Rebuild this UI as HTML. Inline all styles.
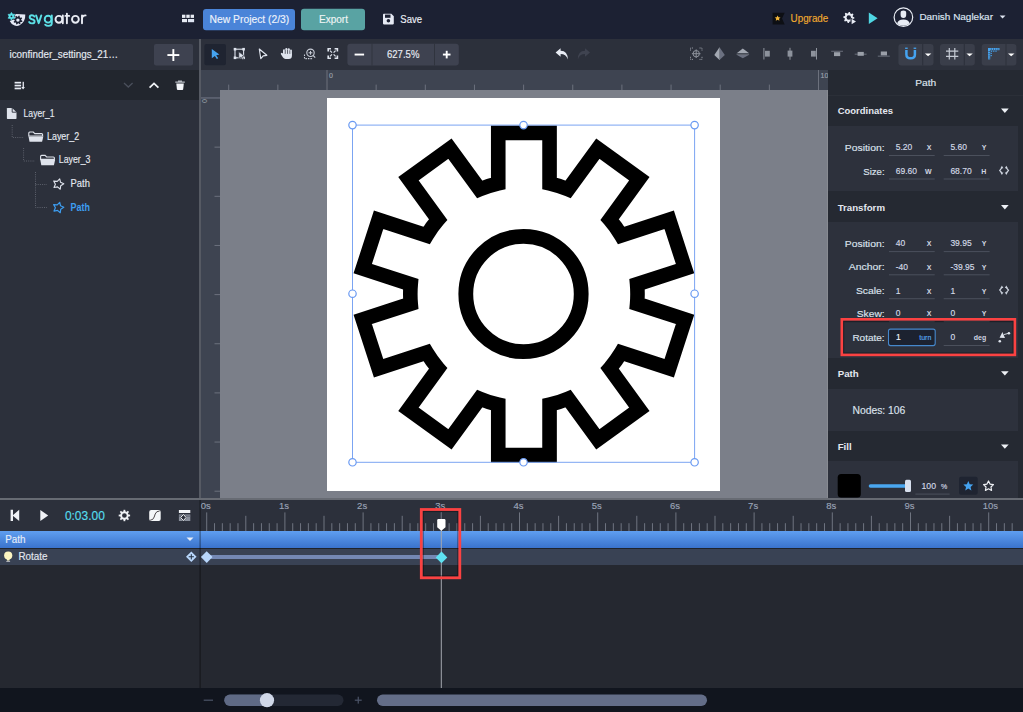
<!DOCTYPE html>
<html><head><meta charset="utf-8">
<style>
html,body{margin:0;padding:0;width:1023px;height:712px;overflow:hidden;background:#2c303b}
svg{display:block}
text{font-family:"Liberation Sans",sans-serif}
</style></head><body>
<svg width="1023" height="712" viewBox="0 0 1023 712">
<rect x="0" y="0" width="1023" height="39" fill="#1c2133" />
<rect x="0" y="39" width="1023" height="31" fill="#2c303b" />
<rect x="0" y="70" width="199" height="30.5" fill="#22262e" />
<rect x="0" y="100" width="199" height="398" fill="#2c303b" />
<rect x="199" y="39" width="2" height="459" fill="#565a63" />
<rect x="201" y="70" width="627" height="428" fill="#3e4451" />
<rect x="220" y="90" width="608" height="408" fill="#7b7f89" />
<rect x="827" y="90" width="1" height="408" fill="#888b92" />
<rect x="327" y="98" width="393" height="393" fill="#ffffff" />
<rect x="828" y="70" width="195" height="428" fill="#252932" />
<rect x="0" y="498" width="1023" height="2" fill="#676b73" />
<rect x="0" y="500" width="1023" height="188" fill="#252830" />
<rect x="0" y="500" width="1023" height="31" fill="#2c303b" />
<rect x="0" y="688" width="1023" height="24" fill="#11151e" />
<path d="M15.6 14.1 L25.3 14.4 Q25.6 21.6 19.6 25.3 Q17.3 26.6 14.6 25.6 Q11.2 24.2 9.7 20.9 L13.8 19.6 Z" fill="#e6eaf6"/>
<path d="M22.41 21.01 L22.14 21.88 L20.64 21.94 L20.22 22.44 L20.44 23.93 L19.64 24.36 L18.53 23.34 L17.89 23.40 L16.99 24.61 L16.12 24.34 L16.06 22.84 L15.56 22.42 L14.07 22.64 L13.64 21.84 L14.66 20.73 L14.60 20.09 L13.39 19.19 L13.66 18.32 L15.16 18.26 L15.58 17.76 L15.36 16.27 L16.16 15.84 L17.27 16.86 L17.91 16.80 L18.81 15.59 L19.68 15.86 L19.74 17.36 L20.24 17.78 L21.73 17.56 L22.16 18.36 L21.14 19.47 L21.20 20.11Z" fill="#1c2133"/>
<circle cx="17.9" cy="20.1" r="1.7" fill="#e6eaf6"/>
<path d="M11.45 12.40 L12.65 14.22 L14.83 14.35 L13.85 16.30 L14.83 18.25 L12.65 18.38 L11.45 20.20 L10.25 18.38 L8.07 18.25 L9.05 16.30 L8.07 14.35 L10.25 14.22Z" fill="#5ce4ec" stroke="#5ce4ec" stroke-width="0.6" stroke-linejoin="round"/>
<circle cx="11.45" cy="16.3" r="0.9" fill="#1c2133"/>
<g fill="none" stroke="#5ce0e6" stroke-width="1.9" stroke-linecap="round" stroke-linejoin="round"><path d="M34.4 16.6 Q33.6 15.3 31.9 15.3 Q29.7 15.3 29.7 17.3 Q29.7 18.7 32 19.2 Q34.6 19.7 34.6 21.5 Q34.6 23.4 32 23.4 Q30.1 23.4 29.2 22.1"/><path d="M36.1 15.4 L38.7 23.2 L41.3 15.4"/><circle cx="48.1" cy="19.2" r="3.4"/><path d="M51.8 15.4 L51.8 23.3 Q51.8 25.9 48.4 25.9 Q46.3 25.9 45.2 24.7"/></g>
<g fill="none" stroke="#e8ebf3" stroke-width="1.9" stroke-linecap="round" stroke-linejoin="round"><circle cx="58.9" cy="19.3" r="3.4"/><path d="M62.8 15.4 L62.8 23.3"/><path d="M66.9 13.6 L66.9 23.3 M65.4 15.9 L69.2 15.9"/><circle cx="75.4" cy="19.3" r="3.4"/><path d="M82 15.4 L82 23.3 M82 19.2 Q82 15.4 85.6 15.4"/></g>
<rect x="182" y="14.7" width="3.4" height="3.2" fill="#e8ecf4" />
<rect x="186.3" y="14.7" width="3.4" height="3.2" fill="#e8ecf4" />
<rect x="190.6" y="14.7" width="3.4" height="3.2" fill="#e8ecf4" />
<rect x="182" y="19" width="5" height="3.2" fill="#e8ecf4" />
<rect x="187.9" y="19" width="6.2" height="3.2" fill="#dfe6f4" />
<rect x="203" y="9" width="92" height="21.3" fill="#4a84d8" rx="3" />
<text x="209.6" y="23" font-size="11" fill="#eef3fb" stroke="#eef3fb" stroke-width="0.15" textLength="79.7" lengthAdjust="spacingAndGlyphs" >New Project (2/3)</text>
<rect x="301" y="8.8" width="64" height="21.5" fill="#59a3a3" rx="3" />
<text x="319" y="22.6" font-size="10.5" fill="#eef5f5" stroke="#eef5f5" stroke-width="0.15" textLength="29" lengthAdjust="spacingAndGlyphs" >Export</text>
<path d="M383 14.5 Q383 13.7 383.8 13.7 L391.3 13.7 L393.8 16.2 L393.8 23.6 Q393.8 24.4 393 24.4 L383.8 24.4 Q383 24.4 383 23.6 Z" fill="#e6eaf4"/>
<rect x="385" y="14.6" width="5.5" height="3.2" fill="#1c2133" />
<circle cx="388.4" cy="20.8" r="1.8" fill="#1c2133"/>
<text x="400.3" y="22.6" font-size="10.5" fill="#eef1f7" stroke="#eef1f7" stroke-width="0.15" textLength="21.7" lengthAdjust="spacingAndGlyphs" >Save</text>
<path d="M772.6 12.8 L784.7 12.8 L782 18.6 L784.7 24.5 L772.6 24.5 Z" fill="#0d0f14"/>
<path d="M777.6 15.4 l0.9 1.9 2 0.2 -1.5 1.3 0.45 2 -1.85 -1.05 -1.85 1.05 0.45 -2 -1.5 -1.3 2 -0.2 z" fill="#f6b83a"/>
<text x="790.6" y="21.5" font-size="10" fill="#f0a92f" stroke="#f0a92f" stroke-width="0.15" textLength="37.7" lengthAdjust="spacingAndGlyphs" >Upgrade</text>
<path d="M854.40 17.50 L854.29 18.59 L852.68 19.11 L852.29 19.83 L852.76 21.46 L851.91 22.16 L850.41 21.38 L849.62 21.62 L848.80 23.10 L847.71 22.99 L847.19 21.38 L846.47 20.99 L844.84 21.46 L844.14 20.61 L844.92 19.11 L844.68 18.32 L843.20 17.50 L843.31 16.41 L844.92 15.89 L845.31 15.17 L844.84 13.54 L845.69 12.84 L847.19 13.62 L847.98 13.38 L848.80 11.90 L849.89 12.01 L850.41 13.62 L851.13 14.01 L852.76 13.54 L853.46 14.39 L852.68 15.89 L852.92 16.68Z" fill="#e8ecf4"/>
<circle cx="848.8" cy="17.5" r="2.2" fill="#1c2133"/>
<path d="M850.5 17.5 L850.5 25 L856.5 21.25 Z" fill="#1c2133"/>
<path d="M851.6 18.8 L851.6 24.3 L856 21.5 Z" fill="#e8ecf4"/>
<path d="M868.8 12.6 L877.6 18.3 L868.8 24 Z" fill="#4fd6e3"/>
<circle cx="903.4" cy="17.2" r="9.3" fill="none" stroke="#e8ecf4" stroke-width="1.2"/>
<path d="M900.6 12.8 Q900.6 10.5 903.4 10.5 Q906.2 10.5 906.2 12.8 L906.2 15 Q906.2 18 903.4 18 Q900.6 18 900.6 15 Z" fill="#e8ecf4"/>
<path d="M897.2 23.2 Q898 19.4 903.4 19.4 Q908.8 19.4 909.6 23.2 Q907.2 25.8 903.4 25.8 Q899.6 25.8 897.2 23.2 Z" fill="#e8ecf4"/>
<text x="919.4" y="20.3" font-size="9.6" fill="#dfe6f2" stroke="#dfe6f2" stroke-width="0.15" textLength="73.6" lengthAdjust="spacingAndGlyphs" >Danish Naglekar</text>
<path d="M999.7 15.5 L1005.5 15.5 L1002.6 18.5 Z" fill="#dfe6f2"/>
<text x="9.5" y="58" font-size="11" fill="#e6eaf2" stroke="#e6eaf2" stroke-width="0.15" textLength="108.5" lengthAdjust="spacingAndGlyphs" >iconfinder_settings_21…</text>
<rect x="154" y="44" width="39" height="21.4" fill="#3e4250" rx="2" />
<rect x="167.4" y="54.1" width="11.9" height="1.9" fill="#ffffff" />
<rect x="172.4" y="49.1" width="1.9" height="11.9" fill="#ffffff" />
<rect x="204.4" y="44.1" width="21.6" height="21.2" fill="#1f2431" rx="2" />
<path d="M211.8 48.9 L219.4 54.6 L216.2 55.2 L218.2 58.2 L216.8 59 L214.9 56 L211.8 58.2 Z" fill="#45a3f0"/>
<g fill="none" stroke="#dfe4ee" stroke-width="1.1"><rect x="235" y="49.2" width="8.6" height="8.6"/></g>
<rect x="233.7" y="47.900000000000006" width="2.6" height="2.6" fill="#dfe4ee" />
<rect x="242.29999999999998" y="47.900000000000006" width="2.6" height="2.6" fill="#dfe4ee" />
<rect x="233.7" y="56.5" width="2.6" height="2.6" fill="#dfe4ee" />
<rect x="242.29999999999998" y="56.5" width="2.6" height="2.6" fill="#dfe4ee" />
<path d="M238.8 51.8 L244.5 56 L242.2 56.4 L243.6 58.8 L242.4 59.4 L241 57 L238.8 58.6 Z" fill="#dfe4ee" stroke="#2c303b" stroke-width="0.6"/>
<path d="M259.3 49 L266.8 55.3 L263.2 55.8 L260.8 58.6 Z" fill="none" stroke="#dfe4ee" stroke-width="1.2" stroke-linejoin="round"/>
<path d="M260.8 51.8 L264.2 54.6 L262.2 55 L261 56.8 Z" fill="#1a1d24"/>
<g fill="#dfe4ee"><rect x="283" y="49.3" width="2" height="6" rx="1"/><rect x="285.3" y="48" width="2.1" height="7" rx="1"/><rect x="287.7" y="48.3" width="2.1" height="7" rx="1"/><rect x="290" y="49.6" width="1.9" height="6" rx="0.95"/><path d="M283 53.5 L291.9 53.5 L291.9 56 Q291.9 58.9 288.8 58.9 L285.5 58.9 Q284 58.9 283 57.6 L280.9 54.3 Q280.5 53.3 281.3 52.9 Q282 52.6 282.6 53.3 Z"/></g>
<g stroke="#2c303b" stroke-width="0.5"><path d="M285.15 50 L285.15 54 M287.55 50 L287.55 54 M289.9 50.5 L289.9 54"/></g>
<g fill="none" stroke="#c9ced8" stroke-width="1.1"><circle cx="310.5" cy="52.8" r="3.7"/><path d="M313.2 55.5 L315.2 57.6"/><path d="M304.5 54.5 L304.5 58.6 L313 58.6" stroke-dasharray="1.5 1"/></g>
<rect x="308.6" y="52.3" width="3.8" height="1" fill="#c9ced8" />
<rect x="310" y="50.9" width="1" height="3.8" fill="#c9ced8" />
<g fill="none" stroke="#dfe4ee" stroke-width="1.6"><path d="M328.2 51.5 L328.2 48.8 L331 48.8 M334.6 48.8 L337.4 48.8 L337.4 51.5 M337.4 55.4 L337.4 58.2 L334.6 58.2 M331 58.2 L328.2 58.2 L328.2 55.4"/><path d="M330 50.6 L332 52.6 M335.6 50.6 L333.6 52.6 M330 56.4 L332 54.4 M335.6 56.4 L333.6 54.4" stroke-width="1.2"/></g>
<rect x="347.4" y="43.8" width="111.4" height="21.6" fill="#3e4250" rx="3" />
<rect x="371.5" y="43.8" width="1" height="21.6" fill="#30343e" />
<rect x="434" y="43.8" width="1" height="21.6" fill="#30343e" />
<rect x="354.6" y="53.6" width="9.5" height="1.9" fill="#ffffff" />
<text x="387" y="57.8" font-size="11" fill="#e8ecf4" stroke="#e8ecf4" stroke-width="0.15" textLength="32.4" lengthAdjust="spacingAndGlyphs" >627.5%</text>
<rect x="442.9" y="53.6" width="7.6" height="1.9" fill="#ffffff" />
<rect x="445.75" y="50.8" width="1.9" height="7.6" fill="#ffffff" />
<path d="M560.6 48.3 L555.6 52.5 L560.6 56.7 L560.6 54 Q566 54 567.8 59.4 Q567.8 51 560.6 50.8 Z" fill="#e8ecf4"/>
<path d="M585 48.3 L590 52.5 L585 56.7 L585 54 Q579.6 54 577.8 59.4 Q577.8 51 585 50.8 Z" fill="#3f4350"/>
<g fill="none" stroke="#8d929c" stroke-width="1"><path d="M690.5 50.6 L690.5 48 L693 48 M699.5 48 L702 48 L702 50.6 M702 56.8 L702 59.4 L699.5 59.4 M693 59.4 L690.5 59.4 L690.5 56.8" stroke-dasharray="1.2 0.8"/><circle cx="696.2" cy="53.7" r="3.2"/><path d="M696.2 49.4 L696.2 58 M691.9 53.7 L700.5 53.7"/></g>
<path d="M719 48 L719 59.5 L714.3 55 Z" fill="#a3a8b2"/><path d="M720 48 L724.8 55 L720 59.5 Z" fill="#6b7080"/><rect x="719.2" y="47.5" width="0.8" height="12.5" fill="#8d929c"/>
<path d="M737 53 L742.8 48.5 L748.8 53 Z" fill="#a3a8b2"/><path d="M737 55 L748.8 55 L742.8 58.3 Z" fill="#6b7080"/><rect x="736.6" y="53.7" width="12.5" height="0.8" fill="#8d929c"/>
<rect x="763.4" y="48" width="1" height="11.5" fill="#8d929c" />
<rect x="765" y="50.8" width="4.8" height="5.8" fill="#8d929c" />
<rect x="789.5" y="47.8" width="1" height="12" fill="#8d929c" />
<rect x="787.6" y="50.6" width="4.8" height="6" fill="#8d929c" />
<rect x="816" y="48" width="1" height="11.5" fill="#8d929c" />
<rect x="811" y="50.8" width="4.8" height="5.8" fill="#8d929c" />
<rect x="831.2" y="50.8" width="11.8" height="0.9" fill="#6f7480" />
<rect x="834" y="52.2" width="6.2" height="3.9" fill="#9a9fa8" />
<rect x="854.7" y="53.7" width="11.9" height="0.9" fill="#6f7480" />
<rect x="857.6" y="51.9" width="6.2" height="3.9" fill="#9a9fa8" />
<rect x="877.8" y="55.7" width="12" height="0.9" fill="#6f7480" />
<rect x="880.8" y="51.5" width="6.2" height="3.9" fill="#9a9fa8" />
<rect x="898.4" y="44" width="35.10000000000002" height="21.4" fill="#3a3e4a" rx="3" />
<rect x="922.2" y="44" width="1" height="21.4" fill="#2c303b" />
<path d="M924.9 53.4 L931.4 53.4 L928.1 56.2 Z" fill="#ffffff"/>
<rect x="940" y="44" width="34.799999999999955" height="21.4" fill="#3a3e4a" rx="3" />
<rect x="963.8" y="44" width="1" height="21.4" fill="#2c303b" />
<path d="M966.4 53.4 L972.8 53.4 L969.6 56.2 Z" fill="#ffffff"/>
<rect x="981.7" y="44" width="34.69999999999993" height="21.4" fill="#3a3e4a" rx="3" />
<rect x="1005.5" y="44" width="1" height="21.4" fill="#2c303b" />
<path d="M1008.0 53.4 L1014.5 53.4 L1011.2 56.2 Z" fill="#ffffff"/>
<path d="M906.4 50.1 L906.4 54.4 Q906.4 58.3 910.65 58.3 Q914.9 58.3 914.9 54.4 L914.9 50.1" fill="none" stroke="#45a3f0" stroke-width="2.5"/>
<rect x="905.1" y="47.6" width="2.6" height="1.3" fill="#45a3f0" />
<rect x="913.6" y="47.6" width="2.6" height="1.3" fill="#45a3f0" />
<g stroke="#c5cad4" stroke-width="1.2"><path d="M949.3 48 L949.3 59.5 M954.8 48 L954.8 59.5 M946 51.2 L958.3 51.2 M946 56.3 L958.3 56.3"/></g>
<g fill="#45a3f0"><rect x="988" y="48" width="2.2" height="11.4"/><rect x="988" y="48" width="11.5" height="2.2"/></g>
<g fill="#3a3e4a"><rect x="990.8" y="48.6" width="1" height="1"/><rect x="993" y="48.6" width="1" height="1"/><rect x="995.2" y="48.6" width="1" height="1"/><rect x="997.4" y="48.6" width="1" height="1"/><rect x="988.6" y="51" width="1" height="1"/><rect x="988.6" y="53.2" width="1" height="1"/><rect x="988.6" y="55.4" width="1" height="1"/><rect x="988.6" y="57.6" width="1" height="1"/></g>
<g fill="#45a3f0"><rect x="991" y="50.6" width="1.2" height="1.2"/><rect x="993.2" y="50.6" width="1.2" height="1.2"/><rect x="995.4" y="50.6" width="1.2" height="1.2"/><rect x="990.6" y="52.8" width="1.2" height="1.2"/><rect x="990.6" y="55" width="1.2" height="1.2"/></g>
<rect x="14.6" y="81.8" width="6.5" height="1.7" fill="#e8ecf4" />
<rect x="14.6" y="84.7" width="6.5" height="1.7" fill="#e8ecf4" />
<rect x="14.6" y="87.6" width="6.5" height="1.7" fill="#e8ecf4" />
<rect x="22.6" y="81.8" width="1.3" height="6.5" fill="#e8ecf4" />
<path d="M21.3 87 L24.9 87 L23.1 89.5 Z" fill="#e8ecf4"/>
<path d="M124 83 L128.3 87 L132.6 83" fill="none" stroke="#4a4f5b" stroke-width="1.3"/>
<path d="M149.6 87.6 L154 83.4 L158.4 87.6" fill="none" stroke="#f2f4f8" stroke-width="1.8"/>
<path d="M175.3 81.6 L184.8 81.6 L184.8 82.8 L175.3 82.8 Z M178 80.4 L182 80.4 L182 81.6 L178 81.6 Z" fill="#b8bcc4"/>
<path d="M176.3 83.6 L183.8 83.6 L183.2 89.2 Q183.1 90 182.3 90 L177.8 90 Q177 90 176.9 89.2 Z" fill="#f4f6fa"/>
<path d="M6.9 108.5 Q6.9 107.9 7.5 107.9 L12.2 107.9 L16.5 112.2 L16.5 118.3 Q16.5 118.9 15.9 118.9 L7.5 118.9 Q6.9 118.9 6.9 118.3 Z" fill="#dfe3ec"/>
<path d="M12.2 107.9 L12.2 112.2 L16.5 112.2" fill="none" stroke="#2c303b" stroke-width="0.9"/>
<text x="23.6" y="117.2" font-size="10" fill="#e4e8f0" stroke="#e4e8f0" stroke-width="0.15" textLength="31" lengthAdjust="spacingAndGlyphs" >Layer_1</text>
<path d="M12.2 125 L12.2 137.5 L24 137.5" stroke="#5d616c" stroke-width="1" stroke-dasharray="1 1.2" fill="none"/>
<path d="M28.8 133 Q28.8 132 29.8 132 L33.3 132 L34.8 133.6 L41.6 133.6 Q42.6 133.6 42.6 134.6 L42.6 136 L28.8 136 Z" fill="none" stroke="#dfe3ec" stroke-width="1.1"/>
<path d="M28.5 136.6 L43.3 136.6 L42.1 141.8 L29.5 141.8 Z" fill="#dfe3ec"/>
<text x="47" y="139.8" font-size="10" fill="#e4e8f0" stroke="#e4e8f0" stroke-width="0.15" textLength="32.2" lengthAdjust="spacingAndGlyphs" >Layer_2</text>
<path d="M23.6 148 L23.6 161 L35 161" stroke="#5d616c" stroke-width="1" stroke-dasharray="1 1.2" fill="none"/>
<path d="M40.6 156.4 Q40.6 155.4 41.6 155.4 L45.1 155.4 L46.6 157.0 L53.400000000000006 157.0 Q54.400000000000006 157.0 54.400000000000006 158.0 L54.400000000000006 159.4 L40.6 159.4 Z" fill="none" stroke="#dfe3ec" stroke-width="1.1"/>
<path d="M40.300000000000004 160.0 L55.1 160.0 L53.900000000000006 165.20000000000002 L41.300000000000004 165.20000000000002 Z" fill="#dfe3ec"/>
<text x="58.8" y="163.2" font-size="10" fill="#e4e8f0" stroke="#e4e8f0" stroke-width="0.15" textLength="31.7" lengthAdjust="spacingAndGlyphs" >Layer_3</text>
<path d="M35.5 172 L35.5 207.5 L47 207.5 M35.5 184.5 L47 184.5" stroke="#5d616c" stroke-width="1" stroke-dasharray="1 1.2" fill="none"/>
<path d="M59.72 178.79 L60.55 182.27 L63.79 183.81 L60.73 185.68 L60.27 189.23 L57.55 186.90 L54.03 187.56 L55.40 184.25 L53.69 181.10 L57.26 181.39Z" fill="none" stroke="#dfe3ec" stroke-width="1.1" stroke-linejoin="round"/>
<text x="70.6" y="187.2" font-size="10" fill="#e4e8f0" stroke="#e4e8f0" stroke-width="0.15" textLength="19.3" lengthAdjust="spacingAndGlyphs" >Path</text>
<path d="M59.72 202.29 L60.55 205.77 L63.79 207.31 L60.73 209.18 L60.27 212.73 L57.55 210.40 L54.03 211.06 L55.40 207.75 L53.69 204.60 L57.26 204.89Z" fill="none" stroke="#3d9df0" stroke-width="1.2" stroke-linejoin="round"/>
<text x="70.6" y="210.7" font-size="10" fill="#3d9df0" font-weight="bold" textLength="19.4" lengthAdjust="spacingAndGlyphs" >Path</text>
<rect x="228.2" y="84.6" width="1" height="5.4" fill="#6c717d" />
<rect x="277.35" y="84.6" width="1" height="5.4" fill="#6c717d" />
<rect x="326.5" y="70" width="1" height="20" fill="#6c717d" />
<rect x="375.65" y="84.6" width="1" height="5.4" fill="#6c717d" />
<rect x="424.8" y="84.6" width="1" height="5.4" fill="#6c717d" />
<rect x="473.95" y="84.6" width="1" height="5.4" fill="#6c717d" />
<rect x="523.1" y="84.6" width="1" height="5.4" fill="#6c717d" />
<rect x="572.25" y="84.6" width="1" height="5.4" fill="#6c717d" />
<rect x="621.4" y="84.6" width="1" height="5.4" fill="#6c717d" />
<rect x="670.55" y="84.6" width="1" height="5.4" fill="#6c717d" />
<rect x="719.7" y="84.6" width="1" height="5.4" fill="#6c717d" />
<rect x="768.85" y="84.6" width="1" height="5.4" fill="#6c717d" />
<rect x="818.0" y="70" width="1" height="20" fill="#6c717d" />
<text x="329" y="77.6" font-size="7" fill="#9aa0ab" stroke="#9aa0ab" stroke-width="0.15" >0</text>
<defs><clipPath id="rc"><rect x="201" y="70" width="627" height="20"/></clipPath></defs>
<text x="820.5" y="77.6" font-size="7" fill="#9aa0ab" stroke="#9aa0ab" stroke-width="0.15" clip-path="url(#rc)">10</text>
<rect x="201" y="97.2" width="19" height="1.5" fill="#626775"/>
<rect x="214.5" y="146.65" width="5.5" height="1" fill="#6c717d" />
<rect x="214.5" y="195.8" width="5.5" height="1" fill="#6c717d" />
<rect x="214.5" y="244.95" width="5.5" height="1" fill="#6c717d" />
<rect x="214.5" y="294.1" width="5.5" height="1" fill="#6c717d" />
<rect x="214.5" y="343.25" width="5.5" height="1" fill="#6c717d" />
<rect x="214.5" y="392.4" width="5.5" height="1" fill="#6c717d" />
<rect x="214.5" y="441.55" width="5.5" height="1" fill="#6c717d" />
<rect x="214.5" y="490.7" width="5.5" height="1" fill="#6c717d" />
<text x="0" y="0" font-size="7" fill="#9aa0ab" transform="translate(202 99) rotate(90)">0</text>
<path d="M498.25 183.33 L498.25 132.90 L549.55 132.90 L549.55 183.33 A113.60 113.60 0 0 1 568.20 189.39 L597.84 148.59 L639.34 178.74 L609.70 219.55 A113.60 113.60 0 0 1 621.22 235.41 L669.19 219.82 L685.04 268.61 L637.08 284.20 A113.60 113.60 0 0 1 637.08 303.80 L685.04 319.39 L669.19 368.18 L621.22 352.59 A113.60 113.60 0 0 1 609.70 368.45 L639.34 409.26 L597.84 439.41 L568.20 398.61 A113.60 113.60 0 0 1 549.55 404.67 L549.55 455.10 L498.25 455.10 L498.25 404.67 A113.60 113.60 0 0 1 479.60 398.61 L449.96 439.41 L408.46 409.26 L438.10 368.45 A113.60 113.60 0 0 1 426.58 352.59 L378.61 368.18 L362.76 319.39 L410.72 303.80 A113.60 113.60 0 0 1 410.72 284.20 L362.76 268.61 L378.61 219.82 L426.58 235.41 A113.60 113.60 0 0 1 438.10 219.55 L408.46 178.74 L449.96 148.59 L479.60 189.39 A113.60 113.60 0 0 1 498.25 183.33 Z" fill="none" stroke="#000" stroke-width="14.6" stroke-linejoin="miter" stroke-miterlimit="10"/>
<circle cx="523.5" cy="294" r="57.7" fill="none" stroke="#000" stroke-width="14.8"/>
<rect x="352.5" y="125.1" width="342.1" height="337.2" fill="none" stroke="#7ba4f2" stroke-width="1"/>
<circle cx="352.50" cy="125.10" r="3.7" fill="#fff" stroke="#6a9af2" stroke-width="1.2"/>
<circle cx="523.55" cy="125.10" r="3.7" fill="#fff" stroke="#6a9af2" stroke-width="1.2"/>
<circle cx="694.60" cy="125.10" r="3.7" fill="#fff" stroke="#6a9af2" stroke-width="1.2"/>
<circle cx="352.50" cy="293.70" r="3.7" fill="#fff" stroke="#6a9af2" stroke-width="1.2"/>
<circle cx="694.60" cy="293.70" r="3.7" fill="#fff" stroke="#6a9af2" stroke-width="1.2"/>
<circle cx="352.50" cy="462.30" r="3.7" fill="#fff" stroke="#6a9af2" stroke-width="1.2"/>
<circle cx="523.55" cy="462.30" r="3.7" fill="#fff" stroke="#6a9af2" stroke-width="1.2"/>
<circle cx="694.60" cy="462.30" r="3.7" fill="#fff" stroke="#6a9af2" stroke-width="1.2"/>
<text x="925.7" y="86.1" font-size="9.8" fill="#dfe4ee" stroke="#dfe4ee" stroke-width="0.15" textLength="21" lengthAdjust="spacingAndGlyphs" text-anchor="middle" >Path</text>
<rect x="828" y="95" width="195" height="1" fill="#2b2f38" />
<text x="837.7" y="114.1" font-size="9.5" fill="#e4e8f0" font-weight="bold" textLength="55.3" lengthAdjust="spacingAndGlyphs" >Coordinates</text>
<path d="M1001 108.5 L1008.7 108.5 L1004.85 112.9 Z" fill="#eef1f6"/>
<rect x="828" y="126" width="190" height="65" fill="#2d313c" />
<text x="884.6" y="151.1" font-size="9.8" fill="#dce2ec" stroke="#dce2ec" stroke-width="0.15" textLength="39.8" lengthAdjust="spacingAndGlyphs" text-anchor="end" >Position:</text>
<text x="895.7" y="150.29999999999998" font-size="8.5" fill="#d4dae6" stroke="#d4dae6" stroke-width="0.15" >5.20</text>
<text x="931.5" y="150.29999999999998" font-size="7" fill="#d0d6e2" font-weight="bold" text-anchor="end" >X</text>
<text x="950.4" y="150.29999999999998" font-size="8.5" fill="#d4dae6" stroke="#d4dae6" stroke-width="0.15" >5.60</text>
<text x="986.3" y="150.29999999999998" font-size="7" fill="#d0d6e2" font-weight="bold" text-anchor="end" >Y</text>
<rect x="889" y="155.0" width="45.7" height="1" fill="#4b505c" />
<rect x="943.7" y="155.0" width="45.9" height="1" fill="#4b505c" />
<text x="884.6" y="174.6" font-size="9.8" fill="#dce2ec" stroke="#dce2ec" stroke-width="0.15" textLength="21.3" lengthAdjust="spacingAndGlyphs" text-anchor="end" >Size:</text>
<text x="895.7" y="173.79999999999998" font-size="8.5" fill="#d4dae6" stroke="#d4dae6" stroke-width="0.15" >69.60</text>
<text x="931.5" y="173.79999999999998" font-size="7" fill="#d0d6e2" font-weight="bold" text-anchor="end" >W</text>
<text x="950.4" y="173.79999999999998" font-size="8.5" fill="#d4dae6" stroke="#d4dae6" stroke-width="0.15" >68.70</text>
<text x="986.3" y="173.79999999999998" font-size="7" fill="#d0d6e2" font-weight="bold" text-anchor="end" >H</text>
<rect x="889" y="178.5" width="45.7" height="1" fill="#4b505c" />
<rect x="943.7" y="178.5" width="45.9" height="1" fill="#4b505c" />
<g fill="none" stroke="#cdd3de" stroke-width="1.2"><path d="M1001.9 167.80 L999.7 170.40 L1001.9 173.00"/><path d="M1006.3 167.80 L1008.5 170.40 L1006.3 173.00"/></g>
<g fill="#cdd3de"><path d="M1000.4 168.20 L1001.9 165.80 L1003.4 168.20 Z M1000.4 172.60 L1001.9 175.00 L1003.4 172.60 Z M1004.8 168.20 L1006.3 165.80 L1007.8 168.20 Z M1004.8 172.60 L1006.3 175.00 L1007.8 172.60 Z"/></g>
<text x="837.7" y="210.6" font-size="9.5" fill="#e4e8f0" font-weight="bold" textLength="47.3" lengthAdjust="spacingAndGlyphs" >Transform</text>
<path d="M1001 205.0 L1008.7 205.0 L1004.85 209.4 Z" fill="#eef1f6"/>
<rect x="828" y="222" width="190" height="136" fill="#2d313c" />
<text x="884.6" y="247.2" font-size="9.8" fill="#dce2ec" stroke="#dce2ec" stroke-width="0.15" textLength="39.8" lengthAdjust="spacingAndGlyphs" text-anchor="end" >Position:</text>
<text x="895.7" y="246.39999999999998" font-size="8.5" fill="#d4dae6" stroke="#d4dae6" stroke-width="0.15" >40</text>
<text x="931.5" y="246.39999999999998" font-size="7" fill="#d0d6e2" font-weight="bold" text-anchor="end" >X</text>
<text x="950.4" y="246.39999999999998" font-size="8.5" fill="#d4dae6" stroke="#d4dae6" stroke-width="0.15" >39.95</text>
<text x="986.3" y="246.39999999999998" font-size="7" fill="#d0d6e2" font-weight="bold" text-anchor="end" >Y</text>
<rect x="889" y="251.1" width="45.7" height="1" fill="#4b505c" />
<rect x="943.7" y="251.1" width="45.9" height="1" fill="#4b505c" />
<text x="884.6" y="270.4" font-size="9.8" fill="#dce2ec" stroke="#dce2ec" stroke-width="0.15" textLength="35.8" lengthAdjust="spacingAndGlyphs" text-anchor="end" >Anchor:</text>
<text x="895.7" y="269.59999999999997" font-size="8.5" fill="#d4dae6" stroke="#d4dae6" stroke-width="0.15" >-40</text>
<text x="931.5" y="269.59999999999997" font-size="7" fill="#d0d6e2" font-weight="bold" text-anchor="end" >X</text>
<text x="950.4" y="269.59999999999997" font-size="8.5" fill="#d4dae6" stroke="#d4dae6" stroke-width="0.15" >-39.95</text>
<text x="986.3" y="269.59999999999997" font-size="7" fill="#d0d6e2" font-weight="bold" text-anchor="end" >Y</text>
<rect x="889" y="274.29999999999995" width="45.7" height="1" fill="#4b505c" />
<rect x="943.7" y="274.29999999999995" width="45.9" height="1" fill="#4b505c" />
<text x="884.6" y="294.3" font-size="9.8" fill="#dce2ec" stroke="#dce2ec" stroke-width="0.15" textLength="28.7" lengthAdjust="spacingAndGlyphs" text-anchor="end" >Scale:</text>
<text x="895.7" y="293.5" font-size="8.5" fill="#d4dae6" stroke="#d4dae6" stroke-width="0.15" >1</text>
<text x="931.5" y="293.5" font-size="7" fill="#d0d6e2" font-weight="bold" text-anchor="end" >X</text>
<text x="950.4" y="293.5" font-size="8.5" fill="#d4dae6" stroke="#d4dae6" stroke-width="0.15" >1</text>
<text x="986.3" y="293.5" font-size="7" fill="#d0d6e2" font-weight="bold" text-anchor="end" >Y</text>
<rect x="889" y="298.2" width="45.7" height="1" fill="#4b505c" />
<rect x="943.7" y="298.2" width="45.9" height="1" fill="#4b505c" />
<g fill="none" stroke="#cdd3de" stroke-width="1.2"><path d="M1001.9 287.50 L999.7 290.10 L1001.9 292.70"/><path d="M1006.3 287.50 L1008.5 290.10 L1006.3 292.70"/></g>
<g fill="#cdd3de"><path d="M1000.4 287.90 L1001.9 285.50 L1003.4 287.90 Z M1000.4 292.30 L1001.9 294.70 L1003.4 292.30 Z M1004.8 287.90 L1006.3 285.50 L1007.8 287.90 Z M1004.8 292.30 L1006.3 294.70 L1007.8 292.30 Z"/></g>
<text x="884.6" y="317.2" font-size="9.8" fill="#dce2ec" stroke="#dce2ec" stroke-width="0.15" textLength="27.8" lengthAdjust="spacingAndGlyphs" text-anchor="end" >Skew:</text>
<text x="895.7" y="316.4" font-size="8.5" fill="#d4dae6" stroke="#d4dae6" stroke-width="0.15" >0</text>
<text x="931.5" y="316.4" font-size="7" fill="#d0d6e2" font-weight="bold" text-anchor="end" >X</text>
<text x="950.4" y="316.4" font-size="8.5" fill="#d4dae6" stroke="#d4dae6" stroke-width="0.15" >0</text>
<text x="986.3" y="316.4" font-size="7" fill="#d0d6e2" font-weight="bold" text-anchor="end" >Y</text>
<rect x="889" y="321.09999999999997" width="45.7" height="1" fill="#4b505c" />
<rect x="943.7" y="321.09999999999997" width="45.9" height="1" fill="#4b505c" />
<text x="884.6" y="341" font-size="9.8" fill="#dce2ec" stroke="#dce2ec" stroke-width="0.15" textLength="32.2" lengthAdjust="spacingAndGlyphs" text-anchor="end" >Rotate:</text>
<rect x="888.5" y="329.1" width="46.7" height="16.5" fill="#1c2230" rx="2" stroke="#4588cc" stroke-width="1.1"/>
<text x="895.9" y="340.2" font-size="8.5" fill="#f0f4fa" stroke="#f0f4fa" stroke-width="0.15" >1</text>
<text x="931.3" y="340.2" font-size="7" fill="#58a6ee" stroke="#58a6ee" stroke-width="0.15" text-anchor="end" >turn</text>
<text x="950.4" y="340.2" font-size="8.5" fill="#d4dae6" stroke="#d4dae6" stroke-width="0.15" >0</text>
<text x="986.3" y="340.2" font-size="7" fill="#d0d6e2" font-weight="bold" text-anchor="end" >deg</text>
<rect x="943.7" y="345" width="45.9" height="1" fill="#4b505c" />
<g fill="#e0e5ee"><path d="M1002.4 332 L1005 338.1 L999.6 337.8 Z"/><circle cx="999.8" cy="341.2" r="1.3"/><circle cx="1008.9" cy="333.2" r="1.3"/></g><path d="M1003.8 334.6 L1008.9 333.2" fill="none" stroke="#e0e5ee" stroke-width="0.9"/>
<rect x="843.6" y="321.6" width="169.5" height="31.5" fill="none" stroke="#000" stroke-opacity="0.35" stroke-width="1.2"/>
<rect x="841.8" y="319.3" width="173.1" height="35.6" fill="none" stroke="#fb4242" stroke-width="2.6"/>
<text x="837.7" y="376.8" font-size="9.5" fill="#e4e8f0" font-weight="bold" textLength="21" lengthAdjust="spacingAndGlyphs" >Path</text>
<path d="M1001 371.2 L1008.7 371.2 L1004.85 375.59999999999997 Z" fill="#eef1f6"/>
<rect x="828" y="389" width="190" height="42" fill="#2d313c" />
<text x="852.5" y="414" font-size="10.4" fill="#dce2ec" stroke="#dce2ec" stroke-width="0.15" textLength="52.8" lengthAdjust="spacingAndGlyphs" >Nodes: 106</text>
<text x="837.7" y="450" font-size="9.5" fill="#e4e8f0" font-weight="bold" textLength="14" lengthAdjust="spacingAndGlyphs" >Fill</text>
<path d="M1001 444.4 L1008.7 444.4 L1004.85 448.79999999999995 Z" fill="#eef1f6"/>
<rect x="828" y="461" width="190" height="37" fill="#2d313c" />
<rect x="837.7" y="474" width="23.1" height="23.6" fill="#000000" rx="3.5" />
<rect x="868.7" y="484.2" width="40" height="3.6" fill="#4aa7f0" rx="1.8" />
<rect x="905" y="479.8" width="6" height="12.2" fill="#d8e0ee" rx="1.5" />
<text x="921.5" y="489.2" font-size="9" fill="#d4dae6" stroke="#d4dae6" stroke-width="0.15" textLength="14.5" lengthAdjust="spacingAndGlyphs" >100</text>
<text x="941" y="489" font-size="7" fill="#d0d6e2" stroke="#d0d6e2" stroke-width="0.15" >%</text>
<rect x="915.4" y="493.6" width="34.2" height="1" fill="#4b505c" />
<rect x="959" y="476.8" width="18.7" height="18" fill="#1f2431" rx="2" />
<path d="M968.30 481.00 L969.71 484.26 L973.25 484.59 L970.58 486.94 L971.36 490.41 L968.30 488.60 L965.24 490.41 L966.02 486.94 L963.35 484.59 L966.89 484.26Z" fill="#45a3f0"/>
<path d="M988.50 481.00 L990.03 484.10 L993.45 484.59 L990.97 487.00 L991.56 490.41 L988.50 488.80 L985.44 490.41 L986.03 487.00 L983.55 484.59 L986.97 484.10Z" fill="none" stroke="#f0f2f6" stroke-width="1.2" stroke-linejoin="round"/>
<path d="M10.6 509.8 L13 509.8 L13 521.1 L10.6 521.1 Z M19.2 509.8 L19.2 521.1 L12.5 515.45 Z" fill="#f0f2f6"/>
<path d="M40.3 509.9 L48.2 515.5 L40.3 521.1 Z" fill="#f0f2f6"/>
<text x="64.9" y="519.8" font-size="12.5" fill="#55dcec" stroke="#55dcec" stroke-width="0.15" textLength="39.9" lengthAdjust="spacingAndGlyphs" >0:03.00</text>
<circle cx="124.4" cy="515.5" r="3.3" fill="none" stroke="#f0f2f6" stroke-width="1.9"/>
<rect x="123.5" y="509.8" width="1.8" height="2.4" fill="#f0f2f6" transform="rotate(0 124.4 515.5)"/>
<rect x="123.5" y="509.8" width="1.8" height="2.4" fill="#f0f2f6" transform="rotate(45 124.4 515.5)"/>
<rect x="123.5" y="509.8" width="1.8" height="2.4" fill="#f0f2f6" transform="rotate(90 124.4 515.5)"/>
<rect x="123.5" y="509.8" width="1.8" height="2.4" fill="#f0f2f6" transform="rotate(135 124.4 515.5)"/>
<rect x="123.5" y="509.8" width="1.8" height="2.4" fill="#f0f2f6" transform="rotate(180 124.4 515.5)"/>
<rect x="123.5" y="509.8" width="1.8" height="2.4" fill="#f0f2f6" transform="rotate(225 124.4 515.5)"/>
<rect x="123.5" y="509.8" width="1.8" height="2.4" fill="#f0f2f6" transform="rotate(270 124.4 515.5)"/>
<rect x="123.5" y="509.8" width="1.8" height="2.4" fill="#f0f2f6" transform="rotate(315 124.4 515.5)"/>
<rect x="149.2" y="510" width="11.5" height="11" fill="#f4f6f8" rx="2" />
<path d="M150.2 520.2 Q153.2 520.2 154.2 517 L155.2 514 Q156.2 511 159.6 511" fill="none" stroke="#3a3438" stroke-width="0.9"/>
<rect x="178.9" y="510" width="11.4" height="3" fill="#f4f6f8" />
<rect x="178.9" y="514.4" width="11.4" height="6.6" fill="#8a909c" />
<rect x="178.9" y="515.6" width="11.4" height="1" fill="#5d6270" />
<path d="M183.4 513.4 L187 517.5 L183.4 521.6 L179.8 517.5 Z" fill="#2c303b"/><path d="M183.4 514.4 L186.1 517.5 L183.4 520.6 L180.7 517.5 Z" fill="none" stroke="#f4f6f8" stroke-width="1"/>
<rect x="206.2" y="512.4" width="1" height="18.600000000000023" fill="#6f7480" />
<rect x="214.02" y="523.2" width="1" height="7.7999999999999545" fill="#6f7480" />
<rect x="221.84" y="523.2" width="1" height="7.7999999999999545" fill="#6f7480" />
<rect x="229.66" y="523.2" width="1" height="7.7999999999999545" fill="#6f7480" />
<rect x="237.48" y="523.2" width="1" height="7.7999999999999545" fill="#6f7480" />
<rect x="245.3" y="515.8" width="1" height="15.200000000000045" fill="#6f7480" />
<rect x="253.12" y="523.2" width="1" height="7.7999999999999545" fill="#6f7480" />
<rect x="260.94" y="523.2" width="1" height="7.7999999999999545" fill="#6f7480" />
<rect x="268.76" y="523.2" width="1" height="7.7999999999999545" fill="#6f7480" />
<rect x="276.58" y="523.2" width="1" height="7.7999999999999545" fill="#6f7480" />
<rect x="284.4" y="512.4" width="1" height="18.600000000000023" fill="#6f7480" />
<rect x="292.22" y="523.2" width="1" height="7.7999999999999545" fill="#6f7480" />
<rect x="300.04" y="523.2" width="1" height="7.7999999999999545" fill="#6f7480" />
<rect x="307.86" y="523.2" width="1" height="7.7999999999999545" fill="#6f7480" />
<rect x="315.68" y="523.2" width="1" height="7.7999999999999545" fill="#6f7480" />
<rect x="323.5" y="515.8" width="1" height="15.200000000000045" fill="#6f7480" />
<rect x="331.32" y="523.2" width="1" height="7.7999999999999545" fill="#6f7480" />
<rect x="339.14" y="523.2" width="1" height="7.7999999999999545" fill="#6f7480" />
<rect x="346.96" y="523.2" width="1" height="7.7999999999999545" fill="#6f7480" />
<rect x="354.78" y="523.2" width="1" height="7.7999999999999545" fill="#6f7480" />
<rect x="362.6" y="512.4" width="1" height="18.600000000000023" fill="#6f7480" />
<rect x="370.42" y="523.2" width="1" height="7.7999999999999545" fill="#6f7480" />
<rect x="378.24" y="523.2" width="1" height="7.7999999999999545" fill="#6f7480" />
<rect x="386.06" y="523.2" width="1" height="7.7999999999999545" fill="#6f7480" />
<rect x="393.88" y="523.2" width="1" height="7.7999999999999545" fill="#6f7480" />
<rect x="401.7" y="515.8" width="1" height="15.200000000000045" fill="#6f7480" />
<rect x="409.52" y="523.2" width="1" height="7.7999999999999545" fill="#6f7480" />
<rect x="417.34" y="523.2" width="1" height="7.7999999999999545" fill="#6f7480" />
<rect x="425.16" y="523.2" width="1" height="7.7999999999999545" fill="#6f7480" />
<rect x="432.98" y="523.2" width="1" height="7.7999999999999545" fill="#6f7480" />
<rect x="440.8" y="512.4" width="1" height="18.600000000000023" fill="#6f7480" />
<rect x="448.62" y="523.2" width="1" height="7.7999999999999545" fill="#6f7480" />
<rect x="456.44" y="523.2" width="1" height="7.7999999999999545" fill="#6f7480" />
<rect x="464.26" y="523.2" width="1" height="7.7999999999999545" fill="#6f7480" />
<rect x="472.08" y="523.2" width="1" height="7.7999999999999545" fill="#6f7480" />
<rect x="479.9" y="515.8" width="1" height="15.200000000000045" fill="#6f7480" />
<rect x="487.72" y="523.2" width="1" height="7.7999999999999545" fill="#6f7480" />
<rect x="495.54" y="523.2" width="1" height="7.7999999999999545" fill="#6f7480" />
<rect x="503.36" y="523.2" width="1" height="7.7999999999999545" fill="#6f7480" />
<rect x="511.18" y="523.2" width="1" height="7.7999999999999545" fill="#6f7480" />
<rect x="519.0" y="512.4" width="1" height="18.600000000000023" fill="#6f7480" />
<rect x="526.82" y="523.2" width="1" height="7.7999999999999545" fill="#6f7480" />
<rect x="534.64" y="523.2" width="1" height="7.7999999999999545" fill="#6f7480" />
<rect x="542.46" y="523.2" width="1" height="7.7999999999999545" fill="#6f7480" />
<rect x="550.28" y="523.2" width="1" height="7.7999999999999545" fill="#6f7480" />
<rect x="558.1" y="515.8" width="1" height="15.200000000000045" fill="#6f7480" />
<rect x="565.92" y="523.2" width="1" height="7.7999999999999545" fill="#6f7480" />
<rect x="573.74" y="523.2" width="1" height="7.7999999999999545" fill="#6f7480" />
<rect x="581.56" y="523.2" width="1" height="7.7999999999999545" fill="#6f7480" />
<rect x="589.38" y="523.2" width="1" height="7.7999999999999545" fill="#6f7480" />
<rect x="597.2" y="512.4" width="1" height="18.600000000000023" fill="#6f7480" />
<rect x="605.02" y="523.2" width="1" height="7.7999999999999545" fill="#6f7480" />
<rect x="612.84" y="523.2" width="1" height="7.7999999999999545" fill="#6f7480" />
<rect x="620.66" y="523.2" width="1" height="7.7999999999999545" fill="#6f7480" />
<rect x="628.48" y="523.2" width="1" height="7.7999999999999545" fill="#6f7480" />
<rect x="636.3" y="515.8" width="1" height="15.200000000000045" fill="#6f7480" />
<rect x="644.12" y="523.2" width="1" height="7.7999999999999545" fill="#6f7480" />
<rect x="651.94" y="523.2" width="1" height="7.7999999999999545" fill="#6f7480" />
<rect x="659.76" y="523.2" width="1" height="7.7999999999999545" fill="#6f7480" />
<rect x="667.58" y="523.2" width="1" height="7.7999999999999545" fill="#6f7480" />
<rect x="675.4" y="512.4" width="1" height="18.600000000000023" fill="#6f7480" />
<rect x="683.22" y="523.2" width="1" height="7.7999999999999545" fill="#6f7480" />
<rect x="691.04" y="523.2" width="1" height="7.7999999999999545" fill="#6f7480" />
<rect x="698.86" y="523.2" width="1" height="7.7999999999999545" fill="#6f7480" />
<rect x="706.68" y="523.2" width="1" height="7.7999999999999545" fill="#6f7480" />
<rect x="714.5" y="515.8" width="1" height="15.200000000000045" fill="#6f7480" />
<rect x="722.32" y="523.2" width="1" height="7.7999999999999545" fill="#6f7480" />
<rect x="730.14" y="523.2" width="1" height="7.7999999999999545" fill="#6f7480" />
<rect x="737.96" y="523.2" width="1" height="7.7999999999999545" fill="#6f7480" />
<rect x="745.78" y="523.2" width="1" height="7.7999999999999545" fill="#6f7480" />
<rect x="753.6" y="512.4" width="1" height="18.600000000000023" fill="#6f7480" />
<rect x="761.42" y="523.2" width="1" height="7.7999999999999545" fill="#6f7480" />
<rect x="769.24" y="523.2" width="1" height="7.7999999999999545" fill="#6f7480" />
<rect x="777.06" y="523.2" width="1" height="7.7999999999999545" fill="#6f7480" />
<rect x="784.88" y="523.2" width="1" height="7.7999999999999545" fill="#6f7480" />
<rect x="792.7" y="515.8" width="1" height="15.200000000000045" fill="#6f7480" />
<rect x="800.52" y="523.2" width="1" height="7.7999999999999545" fill="#6f7480" />
<rect x="808.34" y="523.2" width="1" height="7.7999999999999545" fill="#6f7480" />
<rect x="816.16" y="523.2" width="1" height="7.7999999999999545" fill="#6f7480" />
<rect x="823.98" y="523.2" width="1" height="7.7999999999999545" fill="#6f7480" />
<rect x="831.8" y="512.4" width="1" height="18.600000000000023" fill="#6f7480" />
<rect x="839.62" y="523.2" width="1" height="7.7999999999999545" fill="#6f7480" />
<rect x="847.44" y="523.2" width="1" height="7.7999999999999545" fill="#6f7480" />
<rect x="855.26" y="523.2" width="1" height="7.7999999999999545" fill="#6f7480" />
<rect x="863.08" y="523.2" width="1" height="7.7999999999999545" fill="#6f7480" />
<rect x="870.9" y="515.8" width="1" height="15.200000000000045" fill="#6f7480" />
<rect x="878.72" y="523.2" width="1" height="7.7999999999999545" fill="#6f7480" />
<rect x="886.54" y="523.2" width="1" height="7.7999999999999545" fill="#6f7480" />
<rect x="894.36" y="523.2" width="1" height="7.7999999999999545" fill="#6f7480" />
<rect x="902.18" y="523.2" width="1" height="7.7999999999999545" fill="#6f7480" />
<rect x="910.0" y="512.4" width="1" height="18.600000000000023" fill="#6f7480" />
<rect x="917.82" y="523.2" width="1" height="7.7999999999999545" fill="#6f7480" />
<rect x="925.64" y="523.2" width="1" height="7.7999999999999545" fill="#6f7480" />
<rect x="933.46" y="523.2" width="1" height="7.7999999999999545" fill="#6f7480" />
<rect x="941.28" y="523.2" width="1" height="7.7999999999999545" fill="#6f7480" />
<rect x="949.1" y="515.8" width="1" height="15.200000000000045" fill="#6f7480" />
<rect x="956.92" y="523.2" width="1" height="7.7999999999999545" fill="#6f7480" />
<rect x="964.74" y="523.2" width="1" height="7.7999999999999545" fill="#6f7480" />
<rect x="972.56" y="523.2" width="1" height="7.7999999999999545" fill="#6f7480" />
<rect x="980.38" y="523.2" width="1" height="7.7999999999999545" fill="#6f7480" />
<rect x="988.2" y="512.4" width="1" height="18.600000000000023" fill="#6f7480" />
<rect x="996.02" y="523.2" width="1" height="7.7999999999999545" fill="#6f7480" />
<rect x="1003.84" y="523.2" width="1" height="7.7999999999999545" fill="#6f7480" />
<rect x="1011.66" y="523.2" width="1" height="7.7999999999999545" fill="#6f7480" />
<text x="200.7" y="509.4" font-size="9.5" fill="#9aa3b6" stroke="#9aa3b6" stroke-width="0.15" >0s</text>
<text x="278.9" y="509.4" font-size="9.5" fill="#9aa3b6" stroke="#9aa3b6" stroke-width="0.15" >1s</text>
<text x="357.1" y="509.4" font-size="9.5" fill="#9aa3b6" stroke="#9aa3b6" stroke-width="0.15" >2s</text>
<text x="435.3" y="509.4" font-size="9.5" fill="#9aa3b6" stroke="#9aa3b6" stroke-width="0.15" >3s</text>
<text x="513.5" y="509.4" font-size="9.5" fill="#9aa3b6" stroke="#9aa3b6" stroke-width="0.15" >4s</text>
<text x="591.7" y="509.4" font-size="9.5" fill="#9aa3b6" stroke="#9aa3b6" stroke-width="0.15" >5s</text>
<text x="669.9000000000001" y="509.4" font-size="9.5" fill="#9aa3b6" stroke="#9aa3b6" stroke-width="0.15" >6s</text>
<text x="748.0999999999999" y="509.4" font-size="9.5" fill="#9aa3b6" stroke="#9aa3b6" stroke-width="0.15" >7s</text>
<text x="826.3" y="509.4" font-size="9.5" fill="#9aa3b6" stroke="#9aa3b6" stroke-width="0.15" >8s</text>
<text x="904.5" y="509.4" font-size="9.5" fill="#9aa3b6" stroke="#9aa3b6" stroke-width="0.15" >9s</text>
<text x="982.7" y="509.4" font-size="9.5" fill="#9aa3b6" stroke="#9aa3b6" stroke-width="0.15" >10s</text>
<defs><linearGradient id="bg1" x1="0" y1="0" x2="0" y2="1"><stop offset="0" stop-color="#5f9ef0"/><stop offset="1" stop-color="#3a73cc"/></linearGradient></defs>
<rect x="0" y="531" width="1023" height="17" fill="url(#bg1)" />
<text x="5.2" y="543" font-size="10" fill="#e4ecfa" stroke="#e4ecfa" stroke-width="0.15" textLength="20.3" lengthAdjust="spacingAndGlyphs" >Path</text>
<path d="M186.5 537.4 L193.5 537.4 L190 541 Z" fill="#e8eef8"/>
<rect x="0" y="548" width="1023" height="1" fill="#1f232b" />
<rect x="0" y="549" width="1023" height="16" fill="#394254" />
<circle cx="8.2" cy="555.6" r="4.1" fill="#fcf5c2"/><rect x="6.9" y="559" width="2.6" height="1.6" fill="#fcf5c2"/><rect x="6.3" y="561" width="3.8" height="0.9" fill="#b9bcc2"/>
<text x="18.4" y="560.1" font-size="10" fill="#e4e8f0" stroke="#e4e8f0" stroke-width="0.15" textLength="29.1" lengthAdjust="spacingAndGlyphs" >Rotate</text>
<path d="M191.3 551.6 L196.6 556.75 L191.3 561.9 L186 556.75 Z" fill="#b9d7fc"/>
<rect x="190.8" y="554.2" width="1" height="5.2" fill="#243040" />
<rect x="188.7" y="556.25" width="5.2" height="1" fill="#243040" />
<rect x="206.7" y="555" width="234.6" height="4" fill="#7488b4" />
<path d="M206.7 551.3 L212.5 557.1 L206.7 562.9 L200.9 557.1 Z" fill="#b9d7fc"/>
<rect x="199.5" y="500" width="1.2" height="188" fill="rgba(0,0,0,0.42)" />
<rect x="440.8" y="512" width="1" height="7.5" fill="#5d626e" />
<rect x="440.8" y="519" width="1" height="169" fill="#a3a7af" />
<path d="M441.5 551.6 L447.3 557.4 L441.5 563.2 L435.7 557.4 Z" fill="#5ee2f2"/>
<path d="M437.2 520.4 Q437.2 519.1 438.4 519.1 L444.3 519.1 Q445.5 519.1 445.5 520.4 L445.5 527.2 L441.35 530.8 L437.2 527.2 Z" fill="#ffffff"/>
<rect x="423.3" y="511.5" width="34.5" height="64.3" fill="none" stroke="#000" stroke-opacity="0.35" stroke-width="1.2"/>
<rect x="421.3" y="509.5" width="38.5" height="68.3" fill="none" stroke="#fb4242" stroke-width="2.8"/>
<rect x="203.7" y="699.6" width="9.3" height="1.2" fill="#4b5468" />
<rect x="224.2" y="694.5" width="119.3" height="11.4" fill="#232834" rx="5.7" />
<rect x="224.2" y="694.5" width="45" height="11.4" fill="#5f6a85" rx="5.7" />
<circle cx="267" cy="700.2" r="7.1" fill="#d0d8e8"/>
<rect x="354.8" y="699.6" width="6.9" height="1.2" fill="#4b5468" />
<rect x="357.65" y="696.7" width="1.2" height="6.9" fill="#4b5468" />
<rect x="377" y="694.5" width="330" height="11.4" fill="#636d88" rx="5.7" />
</svg>
</body></html>
